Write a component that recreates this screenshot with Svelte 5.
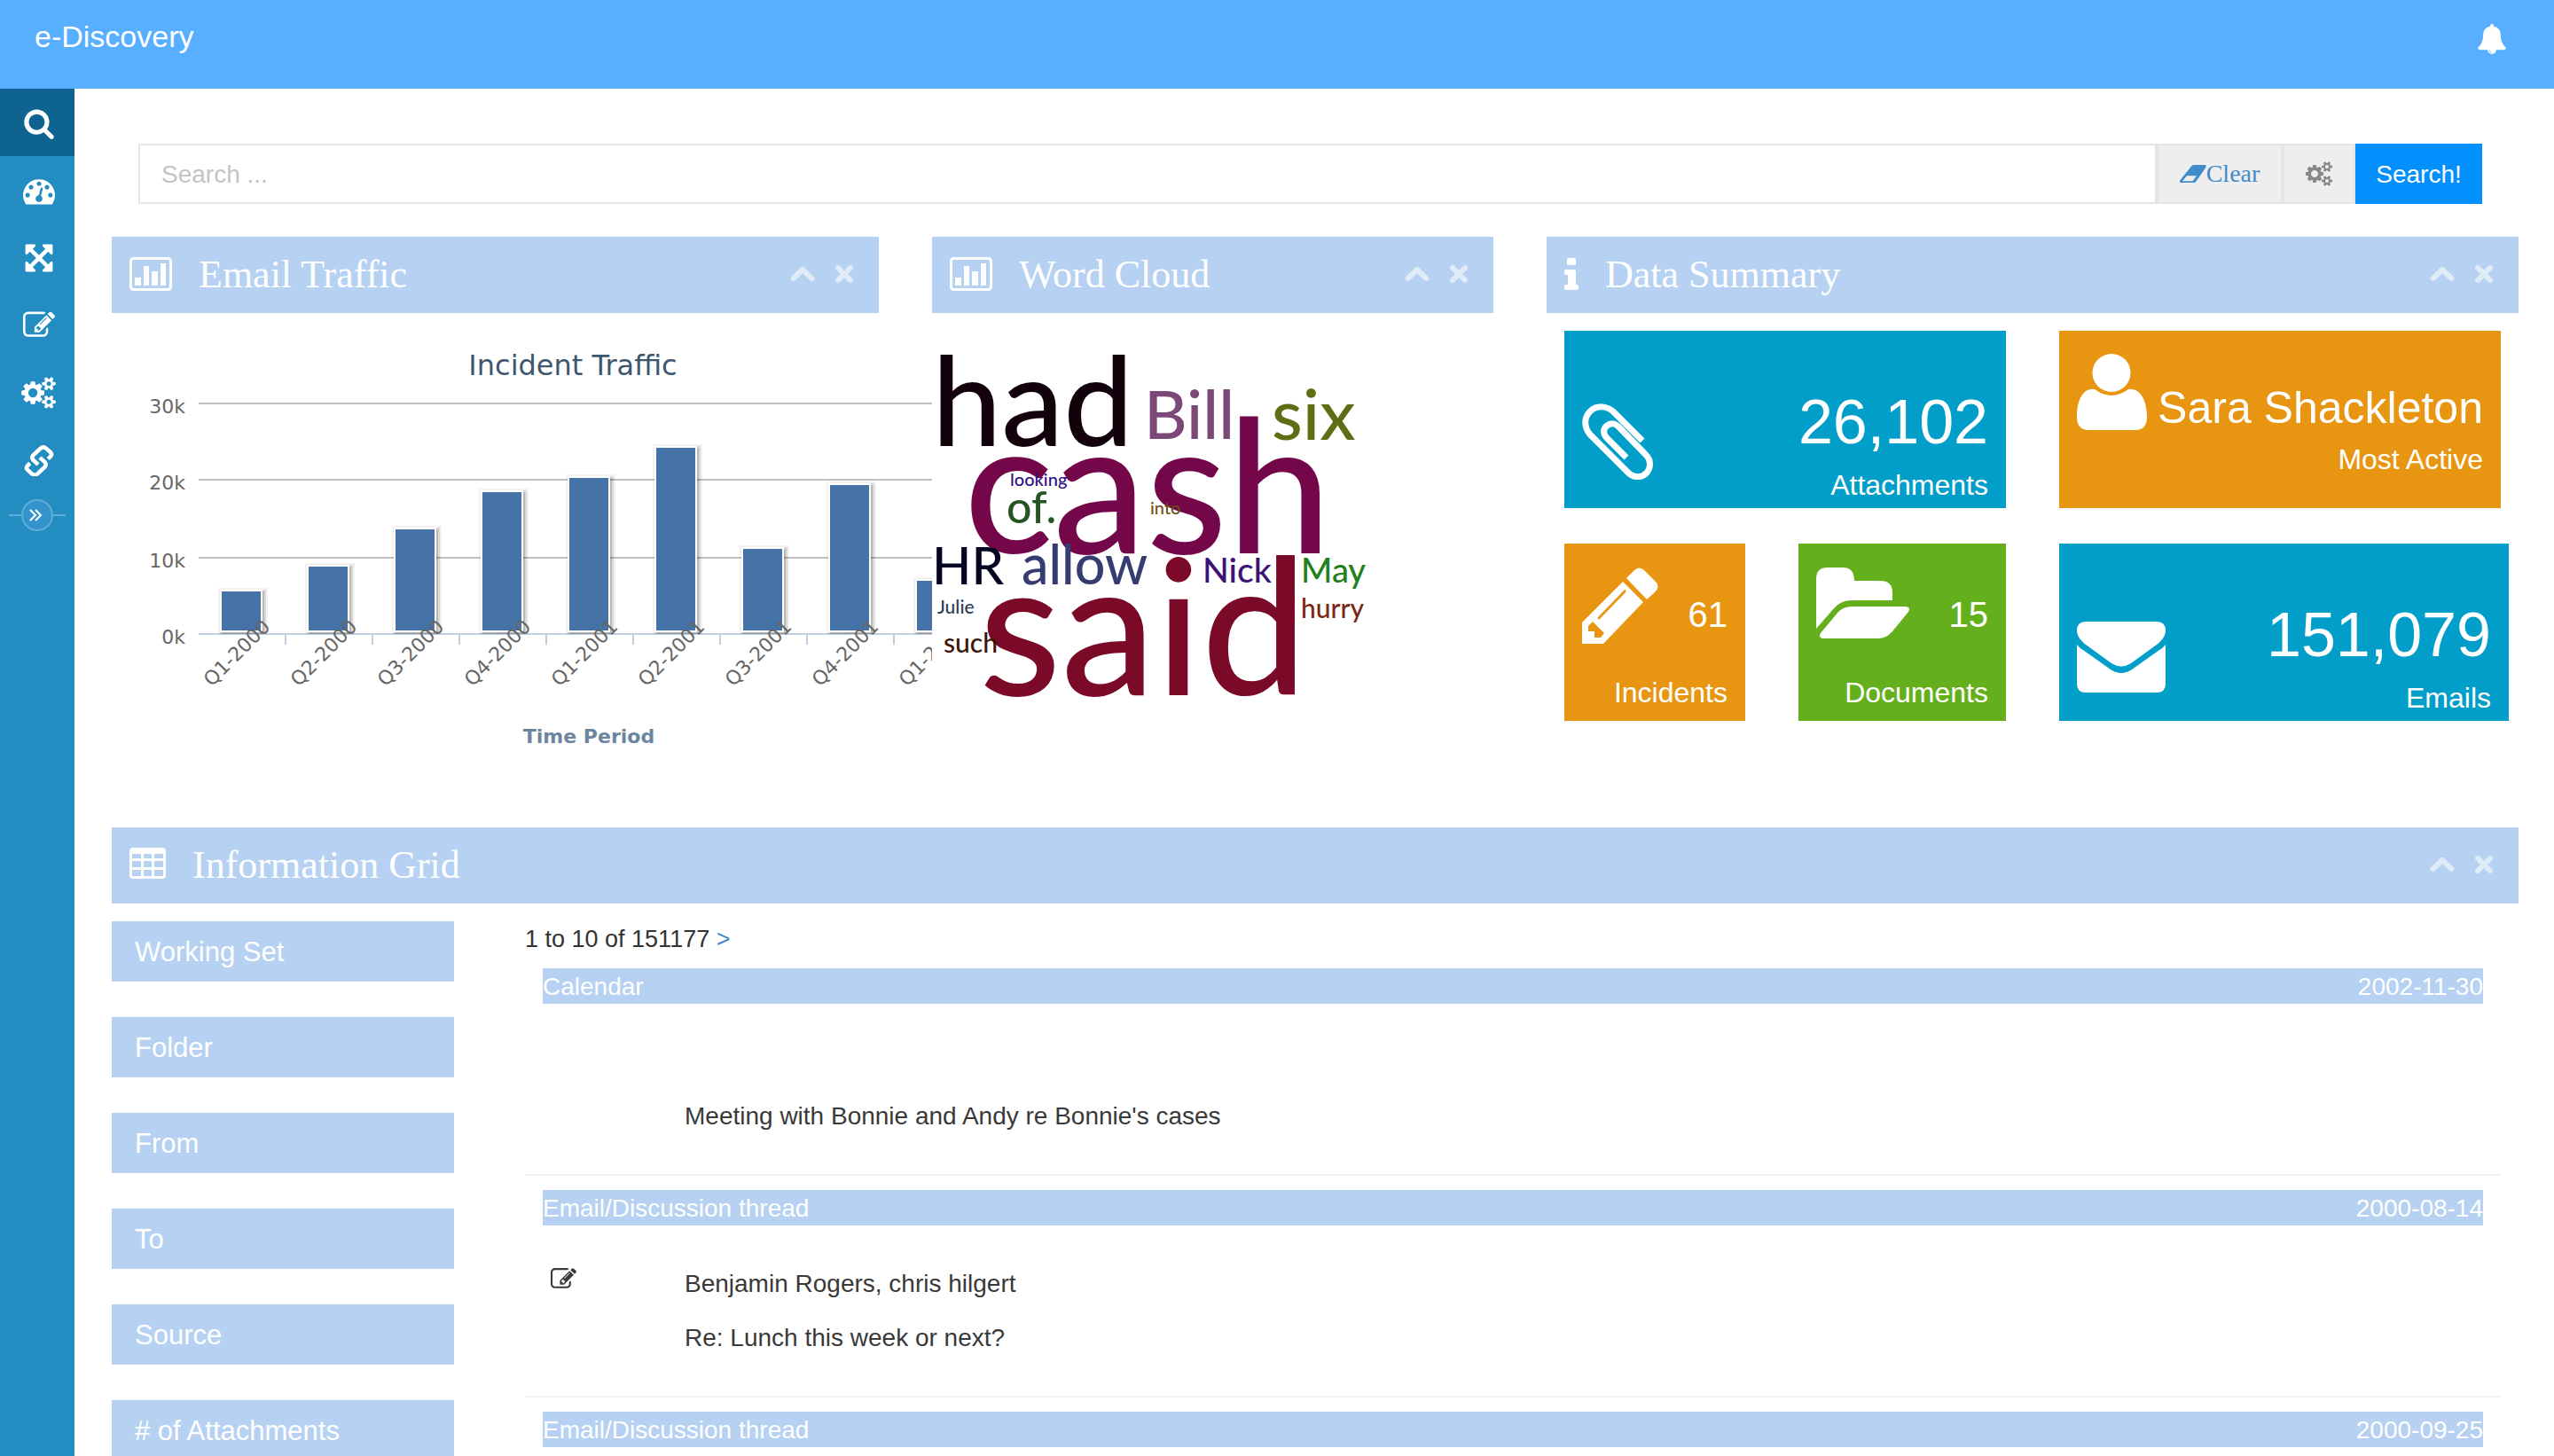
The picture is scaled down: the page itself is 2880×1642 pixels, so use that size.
<script>
  const icons = {
    search: {
      box: '0 0 1792 1792',
      d: 'M1216 832q0-185-131.5-316.5t-316.5-131.5-316.5 131.5-131.5 316.5 131.5 316.5 316.5 131.5 316.5-131.5 131.5-316.5zm512 832q0 52-38 90t-90 38q-54 0-90-38l-343-342q-179 124-399 124-143 0-273.5-55.5t-225-150-150-225-55.5-273.5 55.5-273.5 150-225 225-150 273.5-55.5 273.5 55.5 225 150 150 225 55.5 273.5q0 220-124 399l343 343q37 37 37 90z',
    },
    dashboard: {
      box: '0 0 1792 1792',
      d: 'M384 1152q0-53-37.5-90.5t-90.5-37.5-90.5 37.5-37.5 90.5 37.5 90.5 90.5 37.5 90.5-37.5 37.5-90.5zm192-448q0-53-37.5-90.5t-90.5-37.5-90.5 37.5-37.5 90.5 37.5 90.5 90.5 37.5 90.5-37.5 37.5-90.5zm428 481l101-382q6-26-7.5-48.5t-38.5-29.5-48 6.5-30 39.5l-101 382q-60 5-107 43.5t-63 98.5q-20 77 20 146t117 89 146-20 89-117q16-60-6-117t-72-91zm660-33q0-53-37.5-90.5t-90.5-37.5-90.5 37.5-37.5 90.5 37.5 90.5 90.5 37.5 90.5-37.5 37.5-90.5zm-640-640q0-53-37.5-90.5t-90.5-37.5-90.5 37.5-37.5 90.5 37.5 90.5 90.5 37.5 90.5-37.5 37.5-90.5zm448 192q0-53-37.5-90.5t-90.5-37.5-90.5 37.5-37.5 90.5 37.5 90.5 90.5 37.5 90.5-37.5 37.5-90.5zm320 448q0 261-141 483-19 29-54 29h-1402q-35 0-54-29-141-221-141-483 0-182 71-348t191-286 286-191 348-71 348 71 286 191 191 286 71 348z',
    },
    expand: {
      box: '0 0 1792 1792',
      d: 'M1411 541l-355 355 355 355 144-144q29-31 70-14 39 17 39 59v448q0 26-19 45t-45 19h-448q-42 0-59-40-17-39 14-69l144-144-355-355-355 355 144 144q31 30 14 69-17 40-59 40h-448q-26 0-45-19t-19-45v-448q0-42 40-59 39-17 69 14l144 144 355-355-355-355-144 144q-19 19-45 19-12 0-24-5-40-17-40-59v-448q0-26 19-45t45-19h448q42 0 59 40 17 39-14 69l-144 144 355 355 355-355-144-144q-31-30-14-69 17-40 59-40h448q26 0 45 19t19 45v448q0 42-39 59-13 5-25 5-26 0-45-19z',
    },
    edit: {
      box: '0 0 1792 1792',
      d: 'M888 1184l116-116-152-152-116 116v56h96v96h56zm440-720q-16-16-33 1l-350 350q-17 17-1 33t33-1l350-350q17-17 1-33zm80 594v190q0 119-84.5 203.5t-203.5 84.5h-832q-119 0-203.5-84.5t-84.5-203.5v-832q0-119 84.5-203.5t203.5-84.5h832q63 0 117 25 15 7 18 23 3 17-9 29l-49 49q-14 14-32 8-23-6-45-6h-832q-66 0-113 47t-47 113v832q0 66 47 113t113 47h832q66 0 113-47t47-113v-126q0-13 9-22l64-64q15-15 35-7t20 29zm-96-738l288 288-672 672h-288v-288zm444 132l-92 92-288-288 92-92q28-28 68-28t68 28l152 152q28 28 28 68t-28 68z',
    },
    cogs: {
      box: '0 0 1920 1792',
      d: 'M896 896q0-106-75-181t-181-75-181 75-75 181 75 181 181 75 181-75 75-181zm768 512q0-52-38-90t-90-38-90 38-38 90q0 53 37.5 90.5t90.5 37.5 90.5-37.5 37.5-90.5zm0-1024q0-52-38-90t-90-38-90 38-38 90q0 53 37.5 90.5t90.5 37.5 90.5-37.5 37.5-90.5zm-384 421v185q0 10-7 19.5t-16 10.5l-155 24q-11 35-32 76 34 48 90 115 7 11 7 20 0 12-7 19-23 30-82.5 89.5t-78.5 59.5q-11 0-21-7l-115-90q-37 19-77 31-11 108-23 155-7 24-30 24h-186q-11 0-20-7.5t-10-17.5l-23-153q-34-10-75-31l-118 89q-7 7-20 7-11 0-21-8-144-133-144-160 0-9 7-19 10-14 41-53t47-61q-23-44-35-82l-152-24q-10-1-17-9.5t-7-19.5v-185q0-10 7-19.5t16-10.5l155-24q11-35 32-76-34-48-90-115-7-11-7-20 0-12 7-20 22-30 82-89t79-59q11 0 21 7l115 90q34-18 77-32 11-108 23-154 7-24 30-24h186q11 0 20 7.5t10 17.5l23 153q34 10 75 31l118-89q8-7 20-7 11 0 21 8 144 133 144 160 0 8-7 19-12 16-42 54t-45 60q23 48 34 82l152 23q10 2 17 10.5t7 19.5zm640 533v140q0 16-149 31-12 27-30 52 51 113 51 138 0 4-4 7-122 71-124 71-8 0-46-47t-52-68q-20 2-30 2t-30-2q-14 21-52 68t-46 47q-2 0-124-71-4-3-4-7 0-25 51-138-18-25-30-52-149-15-149-31v-140q0-16 149-31 13-29 30-52-51-113-51-138 0-4 4-7 4-2 35-20t59-34 30-16q8 0 46 46.5t52 67.5q20-2 30-2t30 2q51-71 92-112l6-2q4 0 124 70 4 3 4 7 0 25-51 138 17 23 30 52 149 15 149 31zm0-1024v140q0 16-149 31-12 27-30 52 51 113 51 138 0 4-4 7-122 71-124 71-8 0-46-47t-52-68q-20 2-30 2t-30-2q-14 21-52 68t-46 47q-2 0-124-71-4-3-4-7 0-25 51-138-18-25-30-52-149-15-149-31v-140q0-16 149-31 13-29 30-52-51-113-51-138 0-4 4-7 4-2 35-20t59-34 30-16q8 0 46 46.5t52 67.5q20-2 30-2t30 2q51-71 92-112l6-2q4 0 124 70 4 3 4 7 0 25-51 138 17 23 30 52 149 15 149 31z',
    },
    bell: {
      box: '0 0 1792 1792',
      d: 'M912 1696q0-16-16-16-59 0-101.5-42.5t-42.5-101.5q0-16-16-16t-16 16q0 73 51.5 124.5t124.5 51.5q16 0 16-16zm816-288q0 52-38 90t-90 38h-448q0 106-75 181t-181 75-181-75-75-181h-448q-52 0-90-38t-38-90q50-42 91-88t85-119.5 74.5-158.5 50-206 19.5-260q0-152 117-282.5t307-158.5q-8-19-8-39 0-40 28-68t68-28 68 28 28 68q0 20-8 39 190 28 307 158.5t117 282.5q0 139 19.5 260t50 206 74.5 158.5 85 119.5 91 88z',
    },
  };

  const nav = [
    { icon: 'search', label: 'Search', active: true },
    { icon: 'dashboard', label: 'Dashboard' },
    { icon: 'expand', label: 'Expand' },
    { icon: 'edit', label: 'Edit' },
    { icon: 'cogs', label: 'Settings' },
    { icon: 'link', label: 'Links' },
  ];

  // Chart geometry: value axis of 0..30k, one column per quarter.
  const axis = [
    { label: '30k', y: 102 },
    { label: '20k', y: 188 },
    { label: '10k', y: 276 },
    { label: '0k', y: 362 },
  ];
  const bars = [
    { label: 'Q1-2000', top: 315 },
    { label: 'Q2-2000', top: 287 },
    { label: 'Q3-2000', top: 245 },
    { label: 'Q4-2000', top: 203 },
    { label: 'Q1-2001', top: 187 },
    { label: 'Q2-2001', top: 153 },
    { label: 'Q3-2001', top: 267 },
    { label: 'Q4-2001', top: 195 },
    { label: 'Q1-2002', top: 303 },
  ].map((b, i) => ({ ...b, x: 123 + i * 98 }));
  const shadows = [[10, 0.05], [6, 0.1], [2, 0.15]];

  const words = [
    { t: 'had', x: 0, y: 150, s: 140, c: '#13020b' },
    { t: 'Bill', x: 239, y: 142, s: 75, c: '#7b4878' },
    { t: 'six', x: 383, y: 143, s: 80, c: '#5f6d15' },
    { t: 'cash', x: 36, y: 271, s: 210, c: '#74064a' },
    { t: 'looking', x: 88, y: 195, s: 20, c: '#2d0e84' },
    { t: 'of.', x: 84, y: 237, s: 50, c: '#265423' },
    { t: 'into', x: 246, y: 227, s: 20, c: '#6f4e13' },
    { t: 'HR', x: 0, y: 306, s: 58, c: '#030521' },
    { t: 'allow', x: 101, y: 306, s: 61, c: '#343c70' },
    { t: 'said', x: 53, y: 431, s: 213, c: '#7b0a28' },
    { t: 'Nick', x: 305, y: 304, s: 39, c: '#3b1376' },
    { t: 'May', x: 416, y: 304, s: 38, c: '#217f1d' },
    { t: 'Julie', x: 6, y: 339, s: 21, c: '#2c3d55' },
    { t: 'hurry', x: 416, y: 344, s: 30, c: '#7c2816' },
    { t: 'such', x: 13, y: 383, s: 30, c: '#3c1609' },
  ];

  const filters = ['Working Set', 'Folder', 'From', 'To', 'Source', '# of Attachments'];

  const results = [
    { type: 'Calendar', date: '2002-11-30', who: '', subject: "Meeting with Bonnie and Andy re Bonnie's cases" },
    { type: 'Email/Discussion thread', date: '2000-08-14', editable: true, who: 'Benjamin Rogers, chris hilgert', subject: 'Re: Lunch this week or next?' },
    { type: 'Email/Discussion thread', date: '2000-09-25', editable: true, who: '', subject: '' },
  ];
</script>

{#snippet glyph(name, cls)}
  {#if name === 'link'}
    <svg class={cls} viewBox="-1 -1 35 37" aria-hidden="true">
      <g fill="none" stroke="currentColor" stroke-width="4.600" stroke-linejoin="round">
        <path d="M27 16L30 13Q32 10.500 30 8.500L25 4Q21.500 1 18 4L9.500 12Q7.500 14.500 9.500 17L15.500 22.500" />
        <path d="M6 21L3 24Q1 26.500 3 28.500L8 33Q11.500 36 15 33L23.500 25Q25.500 22.500 23.500 20L17.500 14.500" />
      </g>
    </svg>
  {:else}
    <svg class={cls} viewBox={icons[name].box} aria-hidden="true"><path fill="currentColor" d={icons[name].d} /></svg>
  {/if}
{/snippet}

{#snippet panelHead(kind, title)}
  <header class="panel-head">
    {#if kind === 'chart'}
      <svg class="i-chart" viewBox="0 0 48 38" aria-hidden="true">
        <rect x="1.500" y="1.500" width="45" height="35" rx="3" fill="none" stroke="#fff" stroke-width="3" />
        <path fill="#fff" d="M6 23h7v9h-7zM16 10h6v22h-6zM25 16h7v16h-7zM35 7h6v25h-6z" />
      </svg>
    {:else if kind === 'info'}
      <svg class="i-info" viewBox="0 0 16 36" aria-hidden="true">
        <path fill="#fff" d="M5 0h7q1 0 1 2v5q0 1-1 1h-7q-2 0-2-1v-5q0-2 2-2zM1 13h10q2 0 2 2v15h1q2 0 2 2v2q0 2-2 2h-12q-2 0-2-2v-2q0-2 2-2h2v-11h-2q-2 0-2-2v-2q0-2 1-2z" />
      </svg>
    {:else}
      <svg class="i-table" viewBox="0 0 41 38" aria-hidden="true">
        <path fill="#fff" fill-rule="evenodd" d="M4 0h33q4 0 4 4v27q0 4-4 4h-33q-4 0-4-4v-27q0-4 4-4zM3 7v5h10v-5zM16 7v5h9v-5zM28 7v5h10v-5zM3 15v7h10v-7zM16 15v7h9v-7zM28 15v7h10v-7zM3 25v7h10v-7zM16 25v7h9v-7zM28 25v7h10v-7z" />
      </svg>
    {/if}
    <h2>{title}</h2>
    <button class="tool" aria-label="Collapse">
      <svg class="i-up" viewBox="0 0 28 18" aria-hidden="true"><path d="M3.500 14l10.500-10 10.500 10" /></svg>
    </button>
    <button class="tool" aria-label="Close">
      <svg class="i-x" viewBox="0 0 22 22" aria-hidden="true"><path d="M4 4l14 14M18 4l-14 14" /></svg>
    </button>
  </header>
{/snippet}

<div class="app">
  <header class="topbar">
    <a class="brand" href="#home">e-Discovery</a>
    <button class="bell" aria-label="Notifications">{@render glyph('bell', 'i-bell')}</button>
  </header>

  <div class="body">
    <nav class="sidebar">
      {#each nav as item}
        <a href="#{item.icon}" class:active={item.active} aria-label={item.label}>{@render glyph(item.icon, item.icon === 'cogs' ? 'i-cogs' : 'i-nav')}</a>
      {/each}
      <button class="collapse" aria-label="Expand sidebar">
        <svg viewBox="0 0 36 36" aria-hidden="true">
          <circle cx="18" cy="18" r="17" />
          <path d="M10 12l6 6-6 6M16 12l6 6-6 6" />
        </svg>
      </button>
    </nav>

    <main>
      <form class="searchbar">
        <input type="text" placeholder="Search ..." aria-label="Search" />
        <button type="button" class="addon clear">
          <svg viewBox="0 0 30 20" aria-hidden="true">
            <path fill="currentColor" fill-rule="evenodd" d="M15.500 0h12.500q2.500 0 1.500 2.500l-11 16q-1 1.500-3 1.500h-14q-2.500 0-1.300-2.500l12.800-16q1-1.500 2.500-1.500zM3 18.300h11.500l4.500-6h-11z" />
          </svg>Clear
        </button>
        <button type="button" class="addon gears" aria-label="Options">{@render glyph('cogs', 'i-gears')}</button>
        <button type="submit" class="go">Search!</button>
      </form>

      <div class="panels">
        <section class="panel">
          {@render panelHead('chart', 'Email Traffic')}
          <div class="chart">
            <svg width="925" height="530" role="img" aria-label="Incident Traffic by time period">
              <defs><clipPath id="plot"><rect x="98" y="90" width="827" height="272" /></clipPath></defs>
              <text class="c-title" x="520" y="70">Incident Traffic</text>
              {#each axis as a}
                <text class="c-y" x="83" y={a.y + 11}>{a.label}</text>
                <path class="c-line" class:base={a.label === '0k'} d="M98 {a.y}H925" />
              {/each}
              <g clip-path="url(#plot)">
                {#each bars as b}
                  {#each shadows as s}
                    <rect x={b.x + 2} y={b.top} width="46" height={361 - b.top} fill="none" stroke="#000" stroke-width={s[0]} stroke-opacity={s[1]} />
                  {/each}
                  <rect x={b.x} y={b.top - 2} width="46" height={361 - b.top} fill="#4572a7" stroke="#fff" stroke-width="2" />
                {/each}
              </g>
              {#each bars as b, i}
                <path class="c-tick" d="M{b.x + 73} 363v11" />
                <text class="c-x" transform="translate({b.x + 57} 355) rotate(-45)">{b.label}</text>
              {/each}
              <text class="c-axis" x="538" y="485">Time Period</text>
            </svg>
          </div>
        </section>

        <section class="panel">
          {@render panelHead('chart', 'Word Cloud')}
          <svg class="cloud" width="600" height="500" role="img" aria-label="Word cloud">
            {#each words as w}
              <text x={w.x} y={w.y} font-size={w.s} fill={w.c}>{w.t}</text>
            {/each}
          </svg>
        </section>

        <section class="panel">
          {@render panelHead('info', 'Data Summary')}
          <div class="tiles">
            <div class="row even">
              <a class="tile blue" href="#attachments">
                <svg class="t-clip" viewBox="0 0 80 88" aria-hidden="true">
                  <path d="M68 44L36 12C29 5 17 3 9 11C1 19 3 30 9 37L52 80C58 86 67 86 72 81C78 75 78 66 72 60L41 28C37 24 32 24 28 27C23 31 24 37 28 41L50 63" />
                </svg>
                <span class="value">26,102</span>
                <span class="name">Attachments</span>
              </a>
              <a class="tile orange person" href="#active">
                <svg class="t-user" viewBox="0 0 79 86" aria-hidden="true">
                  <circle cx="39" cy="21.500" r="21.500" />
                  <path d="M20 40Q39 54 58 40C72 38 79 54 79 71Q79 86 66 86H13Q0 86 0 71C0 54 6 38 20 40Z" />
                </svg>
                <span class="value">Sara Shackleton</span>
                <span class="name">Most Active</span>
              </a>
            </div>
            <div class="row odd">
              <a class="tile orange compact" href="#incidents">
                <svg class="t-pencil" viewBox="0 0 86 86" aria-hidden="true">
                  <path fill-rule="evenodd" d="M46 16L69 39L24 86H0V62ZM12 61L7 66V72H14V79H21L25 74ZM48 25L18 56Q17 60 20 58L49 28Q50 24 48 25Z" />
                  <path d="M50 12L58 4Q64-3 71 4L82 15Q89 21 82 28L73 36Z" />
                </svg>
                <span class="value">61</span>
                <span class="name">Incidents</span>
              </a>
              <a class="tile green compact" href="#documents">
                <svg class="t-folder" viewBox="0 0 105 80" aria-hidden="true">
                  <path d="M0 69V13Q0 0 13 0H30Q43 0 43 15H72Q86 15 86 28V37H40Q28 37 20 46Z" />
                  <path d="M40 44H101Q107 45 104 50L86 72Q79 80 70 80H8Q2 79 5 74L25 50Q31 44 40 44Z" />
                </svg>
                <span class="value">15</span>
                <span class="name">Documents</span>
              </a>
              <a class="tile blue" href="#emails">
                <svg class="t-mail" viewBox="0 0 100 80" aria-hidden="true">
                  <path d="M10 0H90Q100 0 100 10C100 17 95 22 90 26L61 47Q50 54 39 47L10 26C5 22 0 17 0 10Q0 0 10 0Z" />
                  <path d="M0 26Q3 30 7 32L38 54Q50 62 62 54L93 32Q97 30 100 26V70Q100 80 90 80H10Q0 80 0 70Z" />
                </svg>
                <span class="value">151,079</span>
                <span class="name">Emails</span>
              </a>
            </div>
          </div>
        </section>
      </div>

      <section class="panel">
        {@render panelHead('table', 'Information Grid')}
        <div class="grid">
          <div class="filters">
            {#each filters as f}<button>{f}</button>{/each}
          </div>
          <div class="results">
            <p class="pager">1 to 10 of 151177 <a href="#next">&gt;</a></p>
            {#each results as r}
              <article>
                <div class="bar"><span>{r.type}</span><time>{r.date}</time></div>
                <div class="detail">
                  <div class="mark">{#if r.editable}{@render glyph('edit', 'i-mark')}{/if}</div>
                  <div>
                    <p>{r.who}</p>
                    <p>{r.subject}</p>
                  </div>
                </div>
              </article>
            {/each}
          </div>
        </div>
      </section>
    </main>
  </div>
</div>

<style>
  .app {
    display: flex;
    flex-direction: column;
    height: 100vh;
    overflow: hidden;
    background: #fff;
    color: #393939;
    font-family: 'Liberation Sans', Arial, sans-serif;
    font-size: 28px;
    line-height: 40px;
  }
  .app :global(*) { box-sizing: border-box; }
  svg { display: block; flex: none; }
  button {
    margin: 0;
    padding: 0;
    border: 0;
    background: none;
    color: inherit;
    font: inherit;
    cursor: pointer;
  }
  a { color: inherit; text-decoration: none; }
  p, h2 { margin: 0; }

  .topbar {
    display: flex;
    flex: none;
    justify-content: space-between;
    align-items: flex-start;
    height: 100px;
    padding: 21px 53px 0 39px;
    background: #58afff;
    color: #fff;
  }
  .brand { font-size: 34px; }
  .bell { padding-top: 6px; }
  .i-bell { width: 34px; height: 34px; }

  .body { display: flex; flex: 1; min-height: 0; }
  .sidebar {
    display: flex;
    flex: none;
    flex-direction: column;
    width: 84px;
    background: #238dc1;
    color: #fff;
  }
  .sidebar a {
    display: flex;
    align-items: center;
    justify-content: center;
    height: 76px;
    padding: 1px 0 0 3px;
  }
  .sidebar a.active { background: #0f6390; }
  .i-nav { width: 36px; height: 36px; }
  .i-cogs { width: 39px; height: 36px; }
  .collapse {
    display: flex;
    align-items: center;
    justify-content: center;
    height: 50px;
    margin: 0 10px;
  }
  .collapse::before, .collapse::after {
    content: '';
    flex: 1;
    height: 2px;
    background: #5fadd5;
  }
  .collapse svg { width: 36px; height: 36px; fill: none; stroke-width: 2; }
  .collapse circle { stroke: #5fadd5; fill: #3393cc; }
  .collapse path { stroke: #fff; }

  main { flex: 1; min-width: 0; padding: 62px 40px 0 42px; }
  .searchbar { display: flex; height: 68px; margin: 0 41px 37px 30px; }
  .searchbar input {
    flex: 1;
    min-width: 0;
    padding: 2px 24px 0;
    border: 2px solid #e5e5e5;
    border-radius: 0;
    background: #fff;
    font: inherit;
    color: #393939;
  }
  .searchbar input::placeholder { color: #c4c4c4; opacity: 1; }
  .addon {
    display: flex;
    align-items: center;
    justify-content: center;
    border: 2px solid #e5e5e5;
    background: #eee;
  }
  .clear { width: 142px; color: #428bca; font-family: 'Liberation Serif', 'Times New Roman', serif; }
  .clear svg { width: 30px; height: 20px; }
  .gears { width: 82px; color: #888; }
  .i-gears { width: 30px; height: 28px; }
  .go { width: 143px; padding-top: 2px; background: #0290ff; color: #fff; }

  .panels {
    display: grid;
    grid-template-columns: 865fr 633fr 1096fr;
    gap: 60px;
    height: 666px;
  }
  .panel { min-width: 0; }
  .panel-head {
    display: flex;
    align-items: center;
    height: 86px;
    padding: 0 28px 2px 20px;
    background: #b6d1f2;
    color: #fff;
  }
  .panel-head h2 {
    flex: 1;
    padding: 2px 0 0 30px;
    font: 400 44px/50px 'Liberation Serif', 'Times New Roman', serif;
  }
  .i-chart { width: 48px; height: 38px; }
  .i-info { width: 16px; height: 36px; }
  .i-table { width: 41px; height: 38px; }
  .tool { margin-left: 22px; }
  .tool svg { fill: none; stroke: #dfebf9; stroke-width: 6; stroke-linecap: round; stroke-linejoin: round; }
  .i-up { width: 28px; height: 18px; }
  .i-x { width: 22px; height: 22px; }

  .chart { margin-right: -60px; overflow: hidden; }
  .chart text { font-family: 'DejaVu Sans', sans-serif; font-size: 22px; fill: #666; }
  .chart .c-title { font-size: 32px; fill: #3e576f; text-anchor: middle; }
  .chart .c-y, .chart .c-x { text-anchor: end; }
  .chart .c-axis { fill: #6d869f; font-weight: 700; text-anchor: middle; }
  .c-line { stroke: #c0c0c0; stroke-width: 2; }
  .c-line.base, .c-tick { stroke: #c0d0e0; stroke-width: 2; }
  .cloud { overflow: visible; font-family: Lato, 'Open Sans', sans-serif; font-weight: 500; }

  .tiles { display: flex; flex-direction: column; gap: 40px; padding-top: 20px; }
  .row { display: grid; gap: 60px; }
  .even { grid-template-columns: 1fr 1fr; padding: 0 20px; }
  .odd { grid-template-columns: 204fr 234fr 507fr; padding: 0 11px 0 20px; }
  .tile {
    display: grid;
    grid-template-columns: auto 1fr;
    grid-template-rows: 102px 40px;
    align-content: end;
    height: 200px;
    padding: 0 20px 6px;
    color: #fff;
    font-size: 32px;
    white-space: nowrap;
  }
  .tile svg { grid-area: 1 / 1 / 3 / 2; align-self: end; margin-bottom: 26px; fill: #fff; }
  .value { grid-area: 1 / 2; justify-self: end; font-size: 70px; line-height: 102px; }
  .name { grid-area: 2 / 1 / 3 / 3; justify-self: end; }
  .person { grid-template-rows: 76px 40px; padding-bottom: 35px; }
  .person .value { font-size: 50px; line-height: 76px; }
  .person svg { margin-bottom: 53px; }
  .compact { grid-template-rows: 136px 40px; padding-bottom: 12px; }
  .compact .value { font-size: 40px; line-height: 136px; }
  .compact svg { align-self: start; margin: 15px 0 0; }
  .blue { background: #009ec9; }
  .orange { background: #e89612; }
  .green { background: #64b01c; }
  .tile .t-clip { width: 80px; height: 88px; fill: none; stroke: #fff; stroke-width: 7; }
  .t-user { width: 79px; height: 86px; }
  .t-pencil { width: 86px; height: 86px; }
  .t-folder { width: 105px; height: 80px; }
  .t-mail { width: 100px; height: 80px; }

  .grid { display: flex; gap: 80px; padding-top: 20px; }
  .filters { display: flex; flex: none; flex-direction: column; gap: 40px; width: 386px; }
  .filters button {
    height: 68px;
    padding: 2px 0 0 26px;
    background: #b6d1f2;
    color: #fff;
    font-size: 31px;
    text-align: left;
  }
  .results { flex: 1; min-width: 0; padding-right: 20px; }
  .pager { height: 53px; color: #333; font-size: 27px; }
  .pager a { color: #428bca; }
  article { height: 234px; margin-bottom: 16px; border-bottom: 2px solid #f2f2f2; }
  .bar {
    display: flex;
    justify-content: space-between;
    height: 40px;
    margin: 0 20px;
    background: #b6d1f2;
    color: #fff;
    line-height: 42px;
  }
  .detail { display: flex; padding: 46px 20px 0; }
  .mark { width: 160px; padding: 0 9px; }
  .i-mark { width: 29px; height: 29px; }
  .detail p { min-height: 40px; margin-bottom: 21px; }
</style>
